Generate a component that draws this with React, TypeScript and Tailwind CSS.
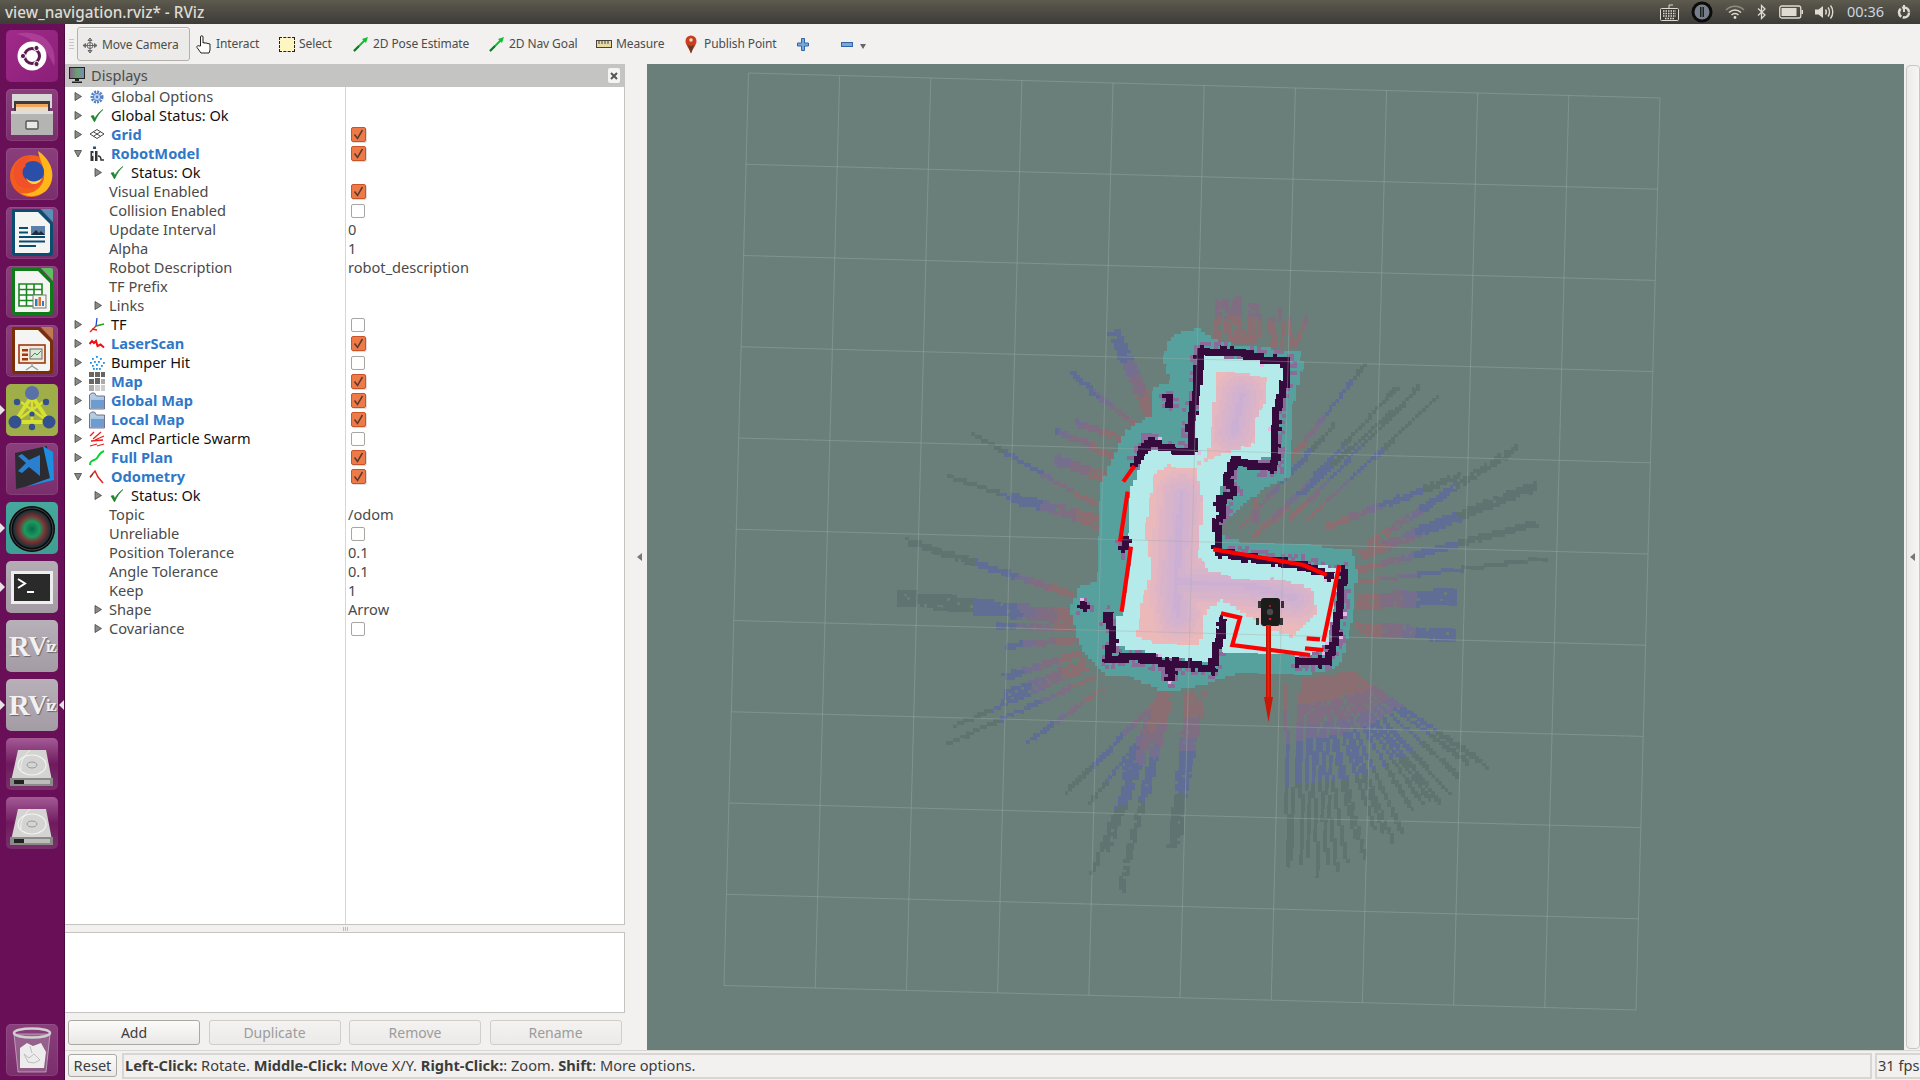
import { useMemo } from "react";
import type { ReactNode } from "react";

type P = [number, number];

const CELL = 3.33;
const OX = 1268;
const OY = 550;
const ANGLE = (1.6 * Math.PI) / 180;

// traced from the map at 3x around (1040,320)
const TEAL: P[] = [[405,35],[470,22],[520,55],[580,72],[680,80],[770,85],[785,130],[760,210],[750,300],[750,400],[745,460],[680,490],[610,540],[545,600],[545,640],[600,660],[930,680],[945,750],[925,930],[895,1020],[880,1040],[770,1060],[600,1050],[530,1070],[480,1090],[370,1110],[270,1065],[190,1060],[120,980],[105,940],[85,860],[115,795],[170,780],[175,540],[180,480],[250,330],[290,305],[330,280],[335,200],[385,180],[365,110],[380,60]];
const FREE: P[] = [[480,100],[740,125],[730,190],[700,260],[690,400],[625,420],[575,420],[545,470],[530,530],[525,680],[640,700],[890,740],[860,960],[800,1000],[700,1000],[530,985],[500,1020],[400,1010],[220,970],[225,880],[240,880],[270,690],[260,660],[265,510],[315,385],[450,385],[470,250]];
const COST: P[] = [[525,148],[590,155],[675,165],[670,235],[640,290],[640,365],[525,400],[460,430],[485,550],[470,650],[465,700],[500,745],[580,770],[700,770],[810,800],[825,870],[750,945],[680,920],[540,830],[490,870],[475,965],[330,960],[285,940],[300,840],[330,750],[310,620],[340,460],[375,430],[450,440],[500,400],[510,320]];
const WALLS: P[][] = [
  [[480,85],[470,140],[465,210],[450,270],[450,330],[455,385],[400,385],[320,360],[305,390],[285,420]],
  [[480,90],[570,90],[660,110],[735,120],[730,180],[705,260],[700,340],[695,440],[620,425],[575,415],[555,470],[575,510],[530,540],[545,570],[525,600],[530,690],[640,710],[790,730],[860,760]],
  [[200,880],[215,940],[200,1010],[300,1005],[385,1030],[385,1065],[395,1020],[510,1040],[520,1000],[545,900]],
  [[905,750],[880,950],[855,1020],[770,1020]],
  [[125,852],[128,856]],
  [[378,230],[382,245]],
  [[250,660],[245,680]],
];
const SKELETON: P[][] = [
  [[600,220],[575,330]],
  [[420,520],[400,800],[410,880]],
  [[410,780],[620,790],[760,830]],
];
const LASER: P[][] = [
  [[283,438],[250,485]],
  [[263,515],[240,665]],
  [[273,680],[245,875]],
  [[520,688],[620,705],[790,735],[860,765]],
  [[898,735],[850,965]],
  [[800,955],[840,958]],
  [[795,985],[850,990]],
  [[543,880],[600,893],[577,975],[810,1005]],
];

// rays, in 2.24x / 2.53x crop coordinates of (860,280)
const RAYS: number[][] = [
  [800,150,795,45,2],[825,150,815,42,2],[845,150,838,42,3],[870,150,875,55,3],[885,155,890,80,1],[925,160,915,95,2],[945,160,937,70,1],[965,160,955,95,1],[970,160,1000,85,1],
  [650,340,565,125,4],[620,370,470,230,1],[640,380,510,275,1],[590,400,480,355,2],[560,440,435,375,2],[560,500,435,450,3],[520,560,250,385,1],[530,620,190,490,1],[530,600,330,545,3],
  [470,790,100,655,2],[480,850,80,798,5],[490,845,300,835,3],[480,880,305,870,2],[490,905,325,920,2],[490,940,320,1000,2],[500,960,320,1040,1],[500,970,310,1060,1],[520,1000,190,1170,1],[500,980,205,1125,1],[540,1030,370,1165,1],
  [680,1040,455,1295,1],[690,1060,510,1320,1],[680,1040,590,1260,4],[650,1100,515,1500,1],[680,1060,580,1540,2],[665,1080,545,1440,3],[690,1060,640,1300,1],[740,1040,700,1430,4],[765,1040,725,1270,2],
  [950,1020,955,1480,1],[1110,760,1530,700,1],[1110,730,1510,610,2],[1120,690,1510,515,3],[1140,660,1465,420,2],[1110,810,1332,795,5],[1110,875,1328,895,4],[1000,600,1290,290,1],[960,600,1250,265,1],[920,610,1200,265,1],[960,450,1130,205,1],[1040,620,1340,490,2],[1140,690,1340,600,1],[850,620,1060,360,1],[880,640,1185,330,1],[880,520,880,610,2],
];

const inPoly = (x: number, y: number, poly: P[]) => {
  let inside = false;
  for (let i = 0, j = poly.length - 1; i < poly.length; j = i++) {
    const [xi, yi] = poly[i];
    const [xj, yj] = poly[j];
    if (yi > y !== yj > y && x < ((xj - xi) * (y - yi)) / (yj - yi) + xi) inside = !inside;
  }
  return inside;
};

const distLine = (x: number, y: number, line: P[]) => {
  let best = 1e9;
  for (let i = 0; i < line.length - 1; i++) {
    const [ax, ay] = line[i];
    const [bx, by] = line[i + 1];
    const dx = bx - ax;
    const dy = by - ay;
    const t = Math.max(0, Math.min(1, ((x - ax) * dx + (y - ay) * dy) / (dx * dx + dy * dy || 1)));
    best = Math.min(best, Math.hypot(x - ax - t * dx, y - ay - t * dy));
  }
  return best;
};

const hash = (a: number, b: number) => {
  const s = Math.sin(a * 12.9898 + b * 78.233) * 43758.5453;
  return s - Math.floor(s);
};

const toHex = (v: number) => Math.round(v).toString(16).padStart(2, "0");
const costColor = (t: number) => {
  const k = Math.round(t * 5) / 5;
  return `#${toHex(0xcb + (0xec - 0xcb) * k)}${toHex(0xb0 + (0xb9 - 0xb0) * k)}${toHex(0xd4 + (0xbb - 0xd4) * k)}`;
};

const rayColor = (d: number) => {
  if (d < 25) return "#8a6e72";
  if (d < 45) return "#7f6e82";
  if (d < 60) return "#746f8e";
  if (d < 104) return "#606e96";
  return "#5f7370";
};

const buildCells = () => {
  const cells = new Map<string, string>();
  const cos = Math.cos(ANGLE);
  const sin = Math.sin(ANGLE);
  const put = (px: number, py: number, color: string) => {
    const u = (px - OX) * cos + (py - OY) * sin;
    const v = -(px - OX) * sin + (py - OY) * cos;
    cells.set(`${Math.round(u / CELL)},${Math.round(v / CELL)}`, color);
  };

  const drawRay = (sx: number, sy: number, ex: number, ey: number, w: number) => {
    const x0 = 860 + sx / 2.24;
    const y0 = 280 + sy / 2.53;
    const x1 = 860 + ex / 2.24;
    const y1 = 280 + ey / 2.53;
    const len = Math.hypot(x1 - x0, y1 - y0);
    const nx = -(y1 - y0) / len;
    const ny = (x1 - x0) / len;
    for (let k = 0; k < w; k++) {
      const off = (k - (w - 1) / 2) * CELL * 0.9;
      for (let d = 0; d < len; d += CELL * 0.7) {
        if (w > 1 && hash(k * 7 + ex, d) > 0.9) continue;
        put(x0 + ((x1 - x0) * d) / len + nx * off, y0 + ((y1 - y0) * d) / len + ny * off, rayColor(d));
      }
    }
  };

  RAYS.forEach((r) => drawRay(r[0], r[1], r[2], r[3], r[4]));
  // dense fan below and to the right of the robot
  for (let i = 0; i < 22; i++) {
    const t = i / 21;
    const ex = 960 + (1400 - 960) * t;
    const ey = 1480 - 225 * t * t - 40 * t + (hash(i, 3) - 0.5) * 90;
    const sx = 985 + 115 * t;
    const sy = 1010 - 20 * t;
    drawRay(sx, sy, ex, ey, 1);
  }

  const cells2: { u: number; v: number; c: string }[] = [];
  for (let j = -85; j <= 85; j++) {
    for (let i = -75; i <= 50; i++) {
      const u = i * CELL;
      const v = j * CELL;
      const px = OX + u * cos - v * sin;
      const py = OY + u * sin + v * cos;
      const zx = (px - 1040) * 3;
      const zy = (py - 320) * 3;
      if (!inPoly(zx, zy, TEAL)) continue;
      let c = "#56a09e";
      if (inPoly(zx, zy, FREE)) {
        c = "#b5eaea";
        if (inPoly(zx, zy, COST)) {
          const d = Math.min(...SKELETON.map((l) => distLine(zx, zy, l)));
          c = costColor(Math.min(1, d / 85));
        }
      }
      const wall = Math.min(...WALLS.map((l) => distLine(zx, zy, l)));
      if (wall < 11 || (wall < 16 && hash(i, j) > 0.72)) c = "#360a3c";
      else if (wall < 20 && hash(i, j) > 0.94) c = "#e8b6e8";
      else if (wall < 28 && c === "#56a09e" && hash(j, i) > 0.55) c = "#8a6b9a";
      cells.delete(`${i},${j}`);
      cells2.push({ u, v, c });
    }
  }

  const byColor = new Map<string, string[]>();
  const size = CELL + 0.5;
  const add = (u: number, v: number, c: string) => {
    if (!byColor.has(c)) byColor.set(c, []);
    byColor.get(c)!.push(`M${u.toFixed(1)} ${v.toFixed(1)}h${size}v${size}h-${size}z`);
  };
  cells.forEach((c, key) => {
    const [i, j] = key.split(",").map(Number);
    add(i * CELL, j * CELL, c);
  });
  cells2.forEach((c) => add(c.u, c.v, c.c));
  // walls go last so that the overlap of the cells can't eat into them
  return Array.from(byColor.entries())
    .map(([c, parts]) => ({ c, d: parts.join("") }))
    .sort((a, b) => Number(a.c === "#360a3c") - Number(b.c === "#360a3c"));
};

const zpts = (line: P[]) => line.map(([x, y]) => `${1040 + x / 3},${320 + y / 3}`).join(" ");

const MapView = () => {
  const layers = useMemo(buildCells, []);
  const grid = [];
  const lerp = (a: P, b: P, t: number): P => [a[0] + (b[0] - a[0]) * t, a[1] + (b[1] - a[1]) * t];
  const TL: P = [748.5, 73];
  const TR: P = [1660, 98];
  const BR: P = [1636, 1010];
  const BL: P = [724, 985.5];
  for (let i = 0; i <= 10; i++) {
    const a = lerp(TL, TR, i / 10);
    const b = lerp(BL, BR, i / 10);
    const c = lerp(TL, BL, i / 10);
    const d = lerp(TR, BR, i / 10);
    grid.push(<line key={`v${i}`} x1={a[0]} y1={a[1]} x2={b[0]} y2={b[1]} />);
    grid.push(<line key={`h${i}`} x1={c[0]} y1={c[1]} x2={d[0]} y2={d[1]} />);
  }
  return (
    <svg className="block h-full w-full" viewBox="647 64 1257 986">
      <rect x="647" y="64" width="1257" height="986" fill="#6b7f7a" />
      <g transform={`translate(${OX} ${OY}) rotate(1.6)`} shapeRendering="crispEdges">
        {layers.map((l) => (
          <path key={l.c} d={l.d} fill={l.c} />
        ))}
      </g>
      <g stroke="#a0aeaa" strokeOpacity="0.42" strokeWidth="1">
        {grid}
      </g>
      <g fill="none" stroke="#ff0000" strokeWidth="4.2">
        {LASER.map((l, i) => (
          <polyline key={i} points={zpts(l)} />
        ))}
      </g>
      {/* robot */}
      <g>
        <rect x="1258" y="601" width="3" height="7" fill="#333" />
        <rect x="1281" y="601" width="3" height="7" fill="#333" />
        <rect x="1256" y="618" width="3" height="7" fill="#333" />
        <rect x="1280" y="618" width="3" height="7" fill="#333" />
        <rect x="1261" y="598" width="19" height="28" rx="3" fill="#1c1c1c" />
        <circle cx="1270" cy="612" r="3.2" fill="#4a4a4a" />
        <circle cx="1270" cy="606" r="1.1" fill="#c81e1e" />
        <circle cx="1270" cy="619" r="1.3" fill="#d81e1e" />
      </g>
      {/* odometry arrow */}
      <rect x="1266" y="625" width="5" height="73" fill="#c01505" />
      <rect x="1267.5" y="625" width="1.8" height="73" fill="#f02010" />
      <polygon points="1264,697 1273,697 1268.5,722" fill="#c81805" />
    </svg>
  );
};

/* ---------- launcher ---------- */

const Tile = ({ className, children, left, right }: { className: string; children: ReactNode; left?: boolean; right?: boolean }) => (
  <div className={`relative h-[52px] w-[52px] shrink-0 rounded-[5px] ${className}`}>
    {children}
    {left && <div className="absolute left-[-6px] top-[21px] h-0 w-0 border-y-[5px] border-l-[5px] border-y-transparent border-l-[#e8e4e6]" />}
    {right && <div className="absolute right-[-6px] top-[21px] h-0 w-0 border-y-[5px] border-r-[5px] border-y-transparent border-r-[#e8e4e6]" />}
  </div>
);

const Ico = ({ children }: { children: ReactNode }) => (
  <svg viewBox="0 0 52 52" className="absolute inset-0 h-full w-full">
    {children}
  </svg>
);

const UbuntuIcon = () => (
  <Ico>
    <path d="M10 4 C36 -2 52 14 48 36 C42 20 28 8 10 4Z" fill="#b04a9c" opacity="0.7" />
    <circle cx="26" cy="26" r="14.5" fill="#fff" />
    <circle cx="26" cy="26" r="7.5" fill="none" stroke="#5c1c50" strokeWidth="3" />
    <circle cx="17" cy="26" r="2.6" fill="#5c1c50" stroke="#fff" />
    <circle cx="30.5" cy="18" r="2.6" fill="#5c1c50" stroke="#fff" />
    <circle cx="30.5" cy="34" r="2.6" fill="#5c1c50" stroke="#fff" />
  </Ico>
);

const FilesIcon = () => (
  <Ico>
    <path d="M6 5h40v14H6z" fill="#d8d8d6" />
    <path d="M8 12h36v10H8z" fill="#3c3c3c" />
    <path d="M10 15h32v3H10z" fill="#f2a65a" />
    <path d="M10 18h32v4H10z" fill="#e8dcc8" />
    <path d="M5 22h42v24H5z" fill="#b4b4b2" />
    <path d="M5 22h42v3H5z" fill="#dededc" />
    <rect x="20" y="32" width="12" height="8" rx="1" fill="#e8e8e8" stroke="#555" strokeWidth="1.4" />
  </Ico>
);

const FirefoxIcon = () => (
  <Ico>
    <circle cx="25" cy="28" r="21" fill="#f25c1d" />
    <path d="M32 3 C46 12 52 30 40 43 C30 50 22 49 14 45 C28 48 40 38 38 24 C37 16 33 10 32 3Z" fill="#ffb619" />
    <circle cx="27" cy="24" r="11" fill="#2b4fa8" />
    <path d="M8 22 C10 12 18 8 26 9 C20 12 18 16 20 18 C16 20 14 28 22 33 C28 37 36 33 38 30 C34 42 16 44 10 34 C8 30 7 26 8 22Z" fill="#f0502a" />
    <path d="M20 30 C24 35 32 34 36 30 C34 37 24 39 20 30Z" fill="#ffd24a" />
  </Ico>
);

const DocIcon = ({ edge, corner, children }: { edge: string; corner: string; children: ReactNode }) => (
  <Ico>
    <path d="M6 2h28l13 14v30a3 3 0 0 1-3 3H9a3 3 0 0 1-3-3z" fill={edge} />
    <path d="M35 2h10a2 2 0 0 1 2 2v11z" fill={corner} />
    <path d="M9 5h23l12 12v27a2 2 0 0 1-2 2H9z" fill="#f4f4f2" />
    {children}
  </Ico>
);

const WriterIcon = () => (
  <DocIcon edge="#0b4d70" corner="#5a8fb8">
    <rect x="25" y="19" width="14" height="9" fill="#5a7fa8" />
    <path d="M25 28l5-5 3 3 2-2 4 4z" fill="#1e2e3e" />
    <path d="M13 20h9v2h-9zM13 24.500h9v2h-9zM13 29h26v2H13zM13 33.500h26v2H13zM13 38h17v2H13z" fill="#0b4d70" />
  </DocIcon>
);

const CalcIcon = () => (
  <DocIcon edge="#107a18" corner="#5cc060">
    <path d="M13 18h23v22H13z" fill="#fff" stroke="#18881e" strokeWidth="1.6" />
    <path d="M13 23.500h23M13 29h23M13 34.500h23M20.500 18v22M28 18v22" stroke="#18881e" strokeWidth="1.6" />
    <rect x="27" y="29" width="13" height="13" fill="#f4f4f2" stroke="#777" />
    <path d="M29 33h2.500v7H29z" fill="#2b7fc4" />
    <path d="M32.500 31h2.500v9h-2.500z" fill="#e0702a" />
    <path d="M36 35h2v5h-2z" fill="#2b7fc4" />
  </DocIcon>
);

const ImpressIcon = () => (
  <DocIcon edge="#7a2e08" corner="#c07a50">
    <rect x="13" y="20" width="26" height="18" fill="#fbe8da" stroke="#9a3a10" strokeWidth="1.6" />
    <path d="M16 24h6v2.500h-6zM16 28.500h6V31h-6zM16 33h6v2.500h-6z" fill="#9a3a10" />
    <rect x="24" y="24" width="12" height="10" fill="#dce8d8" stroke="#666" />
    <path d="M25 32l4-4 2 2 4-4" fill="none" stroke="#2a9a3a" />
    <path d="M26 38v3l-6 4M26 41l6 4" stroke="#999" strokeWidth="1.4" fill="none" />
  </DocIcon>
);

const RosIcon = () => (
  <Ico>
    <path d="M26 12 L9 38 H43Z" fill="none" stroke="#d8e030" strokeWidth="4" />
    <path d="M26 12 L26 46 M9 38 L26 26 L43 38 M15 18 L26 26 L37 18" stroke="#d8e030" strokeWidth="2.500" fill="none" />
    <circle cx="26" cy="9" r="7" fill="#5a70a8" />
    <circle cx="9" cy="38" r="6.500" fill="#34508f" />
    <circle cx="43" cy="38" r="6.500" fill="#34508f" />
    <circle cx="11" cy="18" r="3.200" fill="#34508f" />
    <circle cx="40" cy="18" r="3.200" fill="#34508f" />
    <circle cx="26" cy="30" r="2.600" fill="#34508f" />
    <circle cx="26" cy="43" r="3.200" fill="#34508f" />
  </Ico>
);

const CodeIcon = () => (
  <Ico>
    <path d="M9 10L41 3l5 34-36 9z" fill="#2b2b30" />
    <path d="M37 3l10 6 1 28-29 7 25-9z" fill="#1e8fe0" />
    <path d="M34 12v21L23 24l-7 6-4-2 8-8-8-7 4-2 7 6z" fill="#2a80d0" />
  </Ico>
);

const CameraIcon = () => (
  <Ico>
    <defs>
      <radialGradient id="lens">
        <stop offset="0" stopColor="#0a6a48" />
        <stop offset="0.4" stopColor="#1c9a60" />
        <stop offset="0.7" stopColor="#7a3030" />
        <stop offset="1" stopColor="#12303a" />
      </radialGradient>
    </defs>
    <circle cx="26" cy="27" r="23" fill="#0a0a0a" />
    <circle cx="26" cy="27" r="19" fill="url(#lens)" />
    <circle cx="26" cy="27" r="21" fill="none" stroke="#4a4a4a" />
  </Ico>
);

const TerminalIcon = () => (
  <Ico>
    <rect x="5" y="10" width="42" height="33" fill="#eeeeee" />
    <rect x="8" y="13" width="36" height="27" fill="#2a2a2a" />
    <path d="M12 18l7 4.500-7 4.500" fill="none" stroke="#fff" strokeWidth="2" />
    <path d="M21 30h7v2h-7z" fill="#fff" />
  </Ico>
);

const RvizIcon = () => (
  <div className="flex h-full w-full items-center justify-center overflow-hidden font-['Liberation_Serif',serif] font-bold leading-none tracking-[-1.5px] text-[#f2f0f2] [text-shadow:1px_1px_1px_#6a666a]">
    <span className="text-[29px]">R</span>
    <span className="text-[27px]">V</span>
    <span className="text-[17px]">iz</span>
  </div>
);

const DriveIcon = () => (
  <Ico>
    <path d="M12 12h28l7 36H4z" fill="#d4d4d2" />
    <path d="M4 40h43v8H4z" fill="#8a8a88" />
    <path d="M8 42h10v4H8z" fill="#222" />
    <path d="M18 42h26v4H18z" fill="#bcbcba" />
    <ellipse cx="26" cy="27" rx="14" ry="10" fill="none" stroke="#f2f2f0" strokeWidth="1.200" />
    <ellipse cx="26" cy="27" rx="5" ry="3" fill="none" stroke="#9a9a98" />
    <path d="M24 12C18 18 14 24 15 32" fill="none" stroke="#f2f2f0" />
  </Ico>
);

const TrashIcon = () => (
  <Ico>
    <path d="M8 10l4 38h28l4-38z" fill="#b8a8b6" fillOpacity="0.35" stroke="#e8e8e8" strokeOpacity="0.5" />
    <ellipse cx="26" cy="9" rx="18" ry="4.500" fill="none" stroke="#d0d0d0" strokeWidth="2.500" />
    <path d="M14 24l7-5 6 3 8-3 5 9-2 16H14z" fill="#ececec" />
    <path d="M18 30l5 4 5-4 6 6-6 3-6-1zM24 22l2 7" stroke="#c0bcc0" fill="none" />
  </Ico>
);

const plainTile = "bg-gradient-to-b from-[#8a3f7c] to-[#7a2f6c] shadow-[inset_0_0_0_1px_rgba(255,255,255,0.08)]";
const driveTile = "bg-gradient-to-b from-[#a45a96] via-[#6f1a5e] to-[#7a2f6c]";

const Launcher = () => (
  <div className="flex h-full w-[65px] shrink-0 flex-col items-center gap-[7px] border-r border-[#4a0a40] bg-[#680f57] pb-[4px] pt-[6px]">
    <Tile className="bg-gradient-to-br from-[#a02a8a] to-[#8c1f78]"><UbuntuIcon /></Tile>
    <Tile className={plainTile}><FilesIcon /></Tile>
    <Tile className={plainTile}><FirefoxIcon /></Tile>
    <Tile className={plainTile}><WriterIcon /></Tile>
    <Tile className={plainTile}><CalcIcon /></Tile>
    <Tile className={plainTile}><ImpressIcon /></Tile>
    <Tile className="bg-[#a0ae4a]" left><RosIcon /></Tile>
    <Tile className={plainTile}><CodeIcon /></Tile>
    <Tile className="bg-gradient-to-b from-[#46a89c] to-[#3f9e94]" left><CameraIcon /></Tile>
    <Tile className="bg-gradient-to-b from-[#b4acb4] to-[#a49ca4]" left><TerminalIcon /></Tile>
    <Tile className="bg-gradient-to-b from-[#b8b0b8] to-[#a49ca4]"><RvizIcon /></Tile>
    <Tile className="bg-gradient-to-b from-[#b8b0b8] to-[#a49ca4]" left right><RvizIcon /></Tile>
    <Tile className={driveTile}><DriveIcon /></Tile>
    <Tile className={driveTile}><DriveIcon /></Tile>
    <div className="mt-auto"><Tile className={plainTile}><TrashIcon /></Tile></div>
  </div>
);

/* ---------- top panel ---------- */

const TopPanel = () => (
  <div className="flex h-6 shrink-0 items-center bg-gradient-to-b from-[#5d5a4e] to-[#3c3b37] pl-[5px] font-['Noto_Sans',sans-serif] text-[15.3px] font-medium text-[#dfdbd2]">
    <span>view_navigation.rviz* - RViz</span>
    <div className="ml-auto flex items-center">
      <svg width="19" height="19" viewBox="0 0 19 19" className="mr-[12px]">
        <path d="M9 5V2h4" fill="none" stroke="#dfdbd2" />
        <rect x="0.500" y="5.500" width="18" height="12" rx="1" fill="#3c3b37" stroke="#dfdbd2" />
        <path d="M3 8h13M3 10.500h13M3 13h13M5 15.500h9" stroke="#dfdbd2" strokeDasharray="1.500 1" strokeWidth="1.500" />
      </svg>
      <svg width="22" height="22" viewBox="0 0 22 22" className="mr-[12px]">
        <circle cx="11" cy="11" r="10.500" fill="#0c0c0c" />
        <circle cx="11" cy="11" r="7.500" fill="#77808a" />
        <rect x="9" y="6" width="1.500" height="10" fill="#202020" />
        <rect x="11.500" y="6" width="1.500" height="10" fill="#202020" />
      </svg>
      <svg width="20" height="14" viewBox="0 0 20 14" className="mr-[12px]">
        <path d="M1 5C6 0 14 0 19 5" fill="none" stroke="#8f8c84" strokeWidth="1.500" />
        <path d="M4 7.500C7.500 4 12.500 4 16 7.500M6.500 10c2-2 5-2 7 0" fill="none" stroke="#dfdbd2" strokeWidth="1.500" />
        <circle cx="10" cy="12.500" r="1.400" fill="#dfdbd2" />
      </svg>
      <svg width="9" height="16" viewBox="0 0 9 16" className="mr-[13px]">
        <path d="M1 4.500l7 6.500-3.500 3.500V1.500L8 5 1 11.500" fill="none" stroke="#dfdbd2" strokeWidth="1.300" />
      </svg>
      <svg width="24" height="14" viewBox="0 0 24 14" className="mr-[11px]">
        <rect x="0.750" y="1" width="21" height="12" rx="2" fill="none" stroke="#dfdbd2" strokeWidth="1.300" />
        <rect x="2.500" y="3" width="15" height="8" fill="#dfdbd2" />
        <rect x="22.500" y="5" width="1.500" height="4" fill="#dfdbd2" />
      </svg>
      <svg width="20" height="16" viewBox="0 0 20 16" className="mr-[13px]">
        <path d="M1 5.500h3.500L9 2v12l-4.500-3.500H1z" fill="#dfdbd2" />
        <path d="M11.500 5.500c1 1.500 1 3.500 0 5M14 3.500c2 2.500 2 6.500 0 9M16.500 1.500c3 3.500 3 9.500 0 13" fill="none" stroke="#dfdbd2" strokeWidth="1.400" />
      </svg>
      <span className="mr-[13px] w-[36px] text-[14.5px] font-normal text-[#c9d6e0]">00:36</span>
      <svg width="16" height="16" viewBox="0 0 16 16" className="mr-[8px]">
        <circle cx="8" cy="8.500" r="5" fill="none" stroke="#dfdbd2" strokeWidth="2.500" strokeDasharray="9 1.500" />
        <path d="M8 1v7" stroke="#dfdbd2" strokeWidth="2" />
      </svg>
    </div>
  </div>
);

const ToolItem = ({ icon, label, className }: { icon: ReactNode; label: string; className: string }) => (
  <div className={`flex items-center gap-[4px] whitespace-nowrap ${className}`}>
    {icon}
    <span>{label}</span>
  </div>
);

const PoseArrow = () => (
  <svg width="16" height="16" viewBox="0 0 16 16">
    <path d="M1 15L13 3" stroke="#10c030" strokeWidth="2" />
    <path d="M15 1l-6 2 4 4z" fill="#10c030" />
    <path d="M1 15L6 10" stroke="#0a8020" strokeWidth="2" />
  </svg>
);

const Toolbar = () => (
  <div className="flex h-10 shrink-0 items-center bg-[#f2f1f0] pl-[4px] font-['Noto_Sans',sans-serif] text-[12px] tracking-[-0.1px] text-[#4c4c4c]">
    <div className="flex w-[8px] flex-col gap-[2px]">
      <div className="h-px w-[5px] bg-[#c8c6c2]" />
      <div className="h-px w-[5px] bg-[#c8c6c2]" />
      <div className="h-px w-[5px] bg-[#c8c6c2]" />
      <div className="h-px w-[5px] bg-[#c8c6c2]" />
    </div>
    <div className="flex h-[34px] w-[113px] items-center gap-[4px] rounded-[3px] border border-[#b3b1ab] bg-[#ecebe9] pl-[4px] pt-[2px] shadow-[inset_0_1px_0_#f8f8f7]">
      <svg width="16" height="17" viewBox="0 0 16 17" fill="none" stroke="#666">
        <path d="M8 1v15M1 8.500h14M8 1L6 3.500h4zM8 16l-2-2.500h4zM1 8.500L3.500 6.500v4zM15 8.500l-2.500-2v4z" />
        <circle cx="8" cy="8.500" r="3" />
      </svg>
      <span>Move Camera</span>
    </div>
    <ToolItem
      className="ml-[6px] w-[83px]"
      label="Interact"
      icon={
        <svg width="16" height="19" viewBox="0 0 16 19" fill="#fff" stroke="#222">
          <path d="M4.500 11V2a1.200 1.200 0 0 1 2.500 0v6l1-.5 0 .5 2 0 2 .5 2 .5V15l-1 3H5L1 12.500c-.5-1.500 1-2.500 2-1.500z" />
        </svg>
      }
    />
    <ToolItem
      className="w-[74px]"
      label="Select"
      icon={<div className="h-[15px] w-[16px] border border-dashed border-[#222] bg-[#fdf6c0]" />}
    />
    <ToolItem className="w-[136px]" label="2D Pose Estimate" icon={<PoseArrow />} />
    <ToolItem className="w-[107px]" label="2D Nav Goal" icon={<PoseArrow />} />
    <ToolItem
      className="w-[89px]"
      label="Measure"
      icon={
        <svg width="16" height="8" viewBox="0 0 16 8">
          <rect x="0.500" y="0.500" width="15" height="7" fill="#e8dca0" stroke="#444" />
          <path d="M3 1v3M6 1v3M9 1v3M12 1v3" stroke="#444" />
        </svg>
      }
    />
    <ToolItem
      className="w-[112px] gap-[7px]"
      label="Publish Point"
      icon={
        <svg width="12" height="19" viewBox="0 0 12 19">
          <path d="M6 0.500a5.500 5.500 0 0 1 5.500 5.500C11.500 10 8 13 6 18.500 4 13 0.500 10 0.500 6A5.500 5.500 0 0 1 6 0.500z" fill="#c8401f" />
          <path d="M6 11c1.500 0 3-1 3.500-2L6 18.500 2.500 9c.5 1 2 2 3.500 2z" fill="#6a3a20" />
          <circle cx="6" cy="5" r="1.700" fill="#f2d8c8" />
        </svg>
      }
    />
    <svg width="12" height="13" viewBox="0 0 12 13" className="mr-[32px]">
      <path d="M4.500 0.500h3v4.500H11.500v3H7.500v4.500h-3V8H0.500V5h4z" fill="#7aa6d8" stroke="#2f65a8" />
    </svg>
    <svg width="12" height="5" viewBox="0 0 12 5" className="mr-[7px]">
      <rect x="0.500" y="0.500" width="11" height="4" fill="#7aa6d8" stroke="#2f65a8" />
    </svg>
    <div className="mt-[5px] h-0 w-0 border-x-[3.5px] border-t-[5px] border-x-transparent border-t-[#666]" />
  </div>
);

/* ---------- displays ---------- */

const Chevron = ({ open }: { open?: boolean }) => (
  <svg width="8" height="9" viewBox="0 0 8 9" className="shrink-0">
    {open ? (
      <path d="M0.500 1.500h7L4 8z" fill="#8a8a88" stroke="#444" strokeWidth="0.800" />
    ) : (
      <path d="M1 0.500v8L7.500 4.500z" fill="#8a8a88" stroke="#444" strokeWidth="0.800" />
    )}
  </svg>
);

const CheckMark = () => (
  <svg width="16" height="16" viewBox="0 0 16 16">
    <path d="M2 8l3.500 6C8 8.500 10.500 4.500 14 1.500 10 4 7.500 7.500 5.800 10.500L4.500 7.500z" fill="#1a8a2a" stroke="#1a7a2a" strokeWidth="0.600" />
  </svg>
);

const Gear = () => (
  <svg width="16" height="16" viewBox="0 0 16 16">
    <circle cx="8" cy="8" r="5.200" fill="none" stroke="#4f7fc8" strokeWidth="2.600" strokeDasharray="2 1" />
    <circle cx="8" cy="8" r="3.600" fill="#c8d8f0" stroke="#4f7fc8" />
    <circle cx="8" cy="8" r="1.400" fill="#4f7fc8" />
  </svg>
);

const GridIco = () => (
  <svg width="16" height="16" viewBox="0 0 16 16" fill="none" stroke="#333" strokeWidth="0.900">
    <path d="M8 2.500l7 4.500-7 4.500L1 7zM4.500 4.800l7 4.500M11.500 4.800l-7 4.500" />
  </svg>
);

const RobotIco = () => (
  <svg width="16" height="16" viewBox="0 0 16 16">
    <rect x="4" y="0.500" width="3" height="2.500" fill="#2f4f7f" />
    <path d="M1.500 5h3v10h-3zM6 5h2.500v10H6z" fill="#333" />
    <path d="M9 10c2 0 3 1.500 3 4h3" fill="none" stroke="#333" strokeWidth="1.500" />
    <rect x="3" y="7" width="2" height="3" fill="#ddd" />
  </svg>
);

const TfIco = () => (
  <svg width="16" height="16" viewBox="0 0 16 16" fill="none" strokeWidth="1.300">
    <path d="M7 9L1 15" stroke="#e02020" />
    <path d="M7 9L8 1" stroke="#2040d0" />
    <path d="M7 9l8-2" stroke="#20a020" />
    <path d="M3 12l5 1" stroke="#e02020" />
  </svg>
);

const LaserIco = () => (
  <svg width="16" height="16" viewBox="0 0 16 16" fill="none" stroke="#f01010" strokeWidth="2">
    <path d="M0.500 8L3 5l2 2 2-2 1.500 5 3-1.500 3.500 3" />
  </svg>
);

const BumperIco = () => (
  <svg width="16" height="16" viewBox="0 0 16 16" fill="#1e90e8">
    {[[7,1],[3,3],[11,3],[1,7],[5,6],[9,6],[14,7],[3,10],[7,9],[12,10],[7,13],[4,13],[10,13]].map(([x, y]) => (
      <rect key={`${x}-${y}`} x={x} y={y} width="1.800" height="1.800" />
    ))}
  </svg>
);

const MapIco = () => (
  <svg width="16" height="19" viewBox="0 0 16 19">
    <path d="M0 0h5v5H0zM0 7h5v5H0zM6 0h5v5H6zM12 0h4v5h-4zM6 6h5v6H6z" fill="#666" />
    <path d="M0 13h5v6H0zM12 7h4v5h-4z" fill="#aaa" />
    <path d="M6 13h5v6H6zM12 13h4v6h-4z" fill="#ccc" />
  </svg>
);

const FolderIco = () => (
  <svg width="16" height="18" viewBox="0 0 16 18">
    <path d="M0.500 17V3l2-2h3l2 3h8v13z" fill="#b8cce0" stroke="#557" strokeWidth="0.800" />
    <rect x="2" y="6" width="13" height="10" fill="#6e9ccf" />
    <rect x="2" y="6" width="13" height="2" fill="#a8c8e8" />
  </svg>
);

const ParticleIco = () => (
  <svg width="16" height="16" viewBox="0 0 16 16" fill="none" stroke="#e82020" strokeWidth="1.300">
    <path d="M5 1L1 5M12 1L4 8M15 5L6 9M2 10l12-1M1 15l7-2M8 15l7-2" />
  </svg>
);

const PlanIco = () => (
  <svg width="16" height="16" viewBox="0 0 16 16" fill="none" stroke="#10d030" strokeWidth="2">
    <path d="M1 15c0-5 3-4 6-6s2-6 8-8" />
  </svg>
);

const OdomIco = () => (
  <svg width="16" height="16" viewBox="0 0 16 16" fill="none" stroke="#e02818" strokeWidth="1.500">
    <path d="M1 8l5-6 3 6 5 6" />
    <path d="M1 9L4 5" stroke="#202020" strokeWidth="0.600" />
  </svg>
);

type Row = {
  label: string;
  level?: 1;
  arrow?: "open" | "closed";
  icon?: ReactNode;
  tone?: "blue" | "black" | "dim";
  value?: string;
  check?: boolean;
};

const rows: Row[] = [
  { label: "Global Options", arrow: "closed", icon: <Gear /> },
  { label: "Global Status: Ok", arrow: "closed", icon: <CheckMark />, tone: "black" },
  { label: "Grid", arrow: "closed", icon: <GridIco />, tone: "blue", check: true },
  { label: "RobotModel", arrow: "open", icon: <RobotIco />, tone: "blue", check: true },
  { label: "Status: Ok", level: 1, arrow: "closed", icon: <CheckMark />, tone: "black" },
  { label: "Visual Enabled", level: 1, check: true },
  { label: "Collision Enabled", level: 1, check: false },
  { label: "Update Interval", level: 1, value: "0" },
  { label: "Alpha", level: 1, value: "1" },
  { label: "Robot Description", level: 1, value: "robot_description" },
  { label: "TF Prefix", level: 1 },
  { label: "Links", level: 1, arrow: "closed" },
  { label: "TF", arrow: "closed", icon: <TfIco />, tone: "black", check: false },
  { label: "LaserScan", arrow: "closed", icon: <LaserIco />, tone: "blue", check: true },
  { label: "Bumper Hit", arrow: "closed", icon: <BumperIco />, tone: "black", check: false },
  { label: "Map", arrow: "closed", icon: <MapIco />, tone: "blue", check: true },
  { label: "Global Map", arrow: "closed", icon: <FolderIco />, tone: "blue", check: true },
  { label: "Local Map", arrow: "closed", icon: <FolderIco />, tone: "blue", check: true },
  { label: "Amcl Particle Swarm", arrow: "closed", icon: <ParticleIco />, tone: "black", check: false },
  { label: "Full Plan", arrow: "closed", icon: <PlanIco />, tone: "blue", check: true },
  { label: "Odometry", arrow: "open", icon: <OdomIco />, tone: "blue", check: true },
  { label: "Status: Ok", level: 1, arrow: "closed", icon: <CheckMark />, tone: "black" },
  { label: "Topic", level: 1, value: "/odom" },
  { label: "Unreliable", level: 1, check: false },
  { label: "Position Tolerance", level: 1, value: "0.1" },
  { label: "Angle Tolerance", level: 1, value: "0.1" },
  { label: "Keep", level: 1, value: "1" },
  { label: "Shape", level: 1, arrow: "closed", value: "Arrow" },
  { label: "Covariance", level: 1, arrow: "closed", check: false },
];

const Check = ({ on }: { on: boolean }) =>
  on ? (
    <div className="ml-[3px] flex h-[15px] w-[15px] items-center justify-center rounded-[2px] border border-[#c9542a] bg-[#ee7a48] shadow-[1px_1px_0_#ddd]">
      <svg width="11" height="11" viewBox="0 0 11 11" fill="none" stroke="#5a3a30" strokeWidth="1.500">
        <path d="M1.500 5.500l3 4L9.500 1" />
      </svg>
    </div>
  ) : (
    <div className="ml-[3px] h-[14px] w-[14px] rounded-[2px] border border-[#a8a6a2] bg-white" />
  );

const TreeRow = ({ row }: { row: Row }) => {
  const toneClass = row.tone === "blue" ? "font-bold text-[#2f78c8]" : row.tone === "black" ? "text-[#111111]" : "text-[#4a4a4a]";
  return (
    <div className="flex h-[19px] items-center">
      <div className={`flex h-full w-[280px] items-center ${row.level ? "pl-[29px]" : "pl-[9px]"}`}>
        <div className="w-[15px] shrink-0">{row.arrow && <Chevron open={row.arrow === "open"} />}</div>
        {row.icon && <div className="mr-[6px] flex h-[16px] w-[16px] shrink-0 items-center justify-center">{row.icon}</div>}
        <span className={`whitespace-nowrap ${toneClass}`}>{row.label}</span>
      </div>
      <div className="h-full w-px bg-[#d8d6d2]" />
      <div className="flex h-full flex-1 items-center pl-[2px] text-[#4a4a4a]">
        {row.value && <span>{row.value}</span>}
        {row.check !== undefined && <Check on={row.check} />}
      </div>
    </div>
  );
};

const PanelButton = ({ label, disabled }: { label: string; disabled?: boolean }) => (
  <div
    className={`flex h-[25px] w-[132px] items-center justify-center rounded-[3px] border bg-gradient-to-b ${
      disabled ? "border-[#d0cec9] from-[#f4f3f2] to-[#ebeae8] text-[#9c9c9c]" : "border-[#aaa8a2] from-[#fbfbfa] to-[#e9e8e6] text-[#3c3c3c]"
    }`}
  >
    {label}
  </div>
);

const Displays = () => (
  <div className="flex h-full w-[560px] shrink-0 flex-col font-['Noto_Sans',sans-serif] text-[14.6px]">
    <div className="flex h-[23px] shrink-0 items-center bg-[#c4c4c2] pl-[4px] pr-[5px] text-[#4c4c4c]">
      <svg width="16" height="17" viewBox="0 0 16 17" className="mr-[6px]">
        <defs>
          <linearGradient id="scr" x1="0" x2="1">
            <stop offset="0" stopColor="#8a5a8a" />
            <stop offset="0.5" stopColor="#6aa070" />
            <stop offset="1" stopColor="#7a8ac0" />
          </linearGradient>
        </defs>
        <rect x="0.500" y="0.500" width="15" height="11" fill="url(#scr)" stroke="#222" />
        <path d="M6 12h4v2H6zM3 14.500h10v1.500H3z" fill="#222" />
      </svg>
      <span>Displays</span>
      <div className="ml-auto flex h-[15px] w-[12px] items-center justify-center rounded-[2px] bg-[#f4f4f2]">
        <svg width="8" height="8" viewBox="0 0 8 8" stroke="#555" strokeWidth="2">
          <path d="M1 1l6 6M7 1L1 7" />
        </svg>
      </div>
    </div>
    <div className="h-[838px] shrink-0 border-b border-r border-[#c5c3be] bg-white">
      {rows.map((row, i) => (
        <TreeRow key={i} row={row} />
      ))}
      <div className="ml-[280px] h-[286px] w-px bg-[#d8d6d2]" />
    </div>
    <div className="flex h-[7px] shrink-0 items-center justify-center gap-px">
      <div className="h-[4px] w-px bg-[#bdbbb6]" />
      <div className="h-[4px] w-px bg-[#bdbbb6]" />
      <div className="h-[4px] w-px bg-[#bdbbb6]" />
    </div>
    <div className="h-[81px] shrink-0 border-y border-r border-[#c5c3be] bg-white" />
    <div className="mt-[7px] flex gap-[8.5px] pl-[3px] text-[14px]">
      <PanelButton label="Add" />
      <PanelButton label="Duplicate" disabled />
      <PanelButton label="Remove" disabled />
      <PanelButton label="Rename" disabled />
    </div>
  </div>
);

const StatusBar = () => (
  <div className="flex h-[30px] shrink-0 items-center border-t border-[#d8d6d2] bg-[#f2f1f0] pl-[3px] font-['Noto_Sans',sans-serif] text-[14.6px] text-[#3c3c3c]">
    <div className="flex h-[23px] w-[49px] items-center justify-center rounded-[3px] border border-[#aaa8a2] bg-gradient-to-b from-[#fbfbfa] to-[#e9e8e6]">Reset</div>
    <div className="ml-[5px] flex h-[26px] w-[1750px] items-center border-2 border-[#d8d6d2] pl-[1px]">
      <span className="whitespace-nowrap">
        <b>Left-Click:</b> Rotate. <b>Middle-Click:</b> Move X/Y. <b>Right-Click:</b>: Zoom. <b>Shift</b>: More options.
      </span>
    </div>
    <div className="ml-[3px] flex h-[26px] w-[45px] items-center whitespace-nowrap border-2 border-r-0 border-[#d8d6d2] pl-[1px]">31 fps</div>
  </div>
);

const App = () => (
  <div className="flex h-[1080px] w-[1920px] flex-col overflow-hidden bg-[#f2f1f0]">
    <TopPanel />
    <div className="flex h-[1056px]">
      <Launcher />
      <div className="flex w-[1855px] flex-col">
        <Toolbar />
        <div className="flex h-[986px] shrink-0">
          <Displays />
          <div className="flex w-[22px] shrink-0 items-center justify-center">
            <div className="ml-[6px] h-0 w-0 border-y-[4px] border-r-[5px] border-y-transparent border-r-[#777]" />
          </div>
          <div className="h-full w-[1257px] shrink-0">
            <MapView />
          </div>
          <div className="flex w-[16px] shrink-0 items-center justify-center py-px pl-px">
            <div className="flex h-full w-[14px] items-center justify-center rounded-[4px] border border-[#c8c6c2] bg-gradient-to-r from-[#ecebe9] to-[#f6f5f4]">
              <div className="h-0 w-0 border-y-[4px] border-r-[5px] border-y-transparent border-r-[#777]" />
            </div>
          </div>
        </div>
        <StatusBar />
      </div>
    </div>
  </div>
);

export default App;
